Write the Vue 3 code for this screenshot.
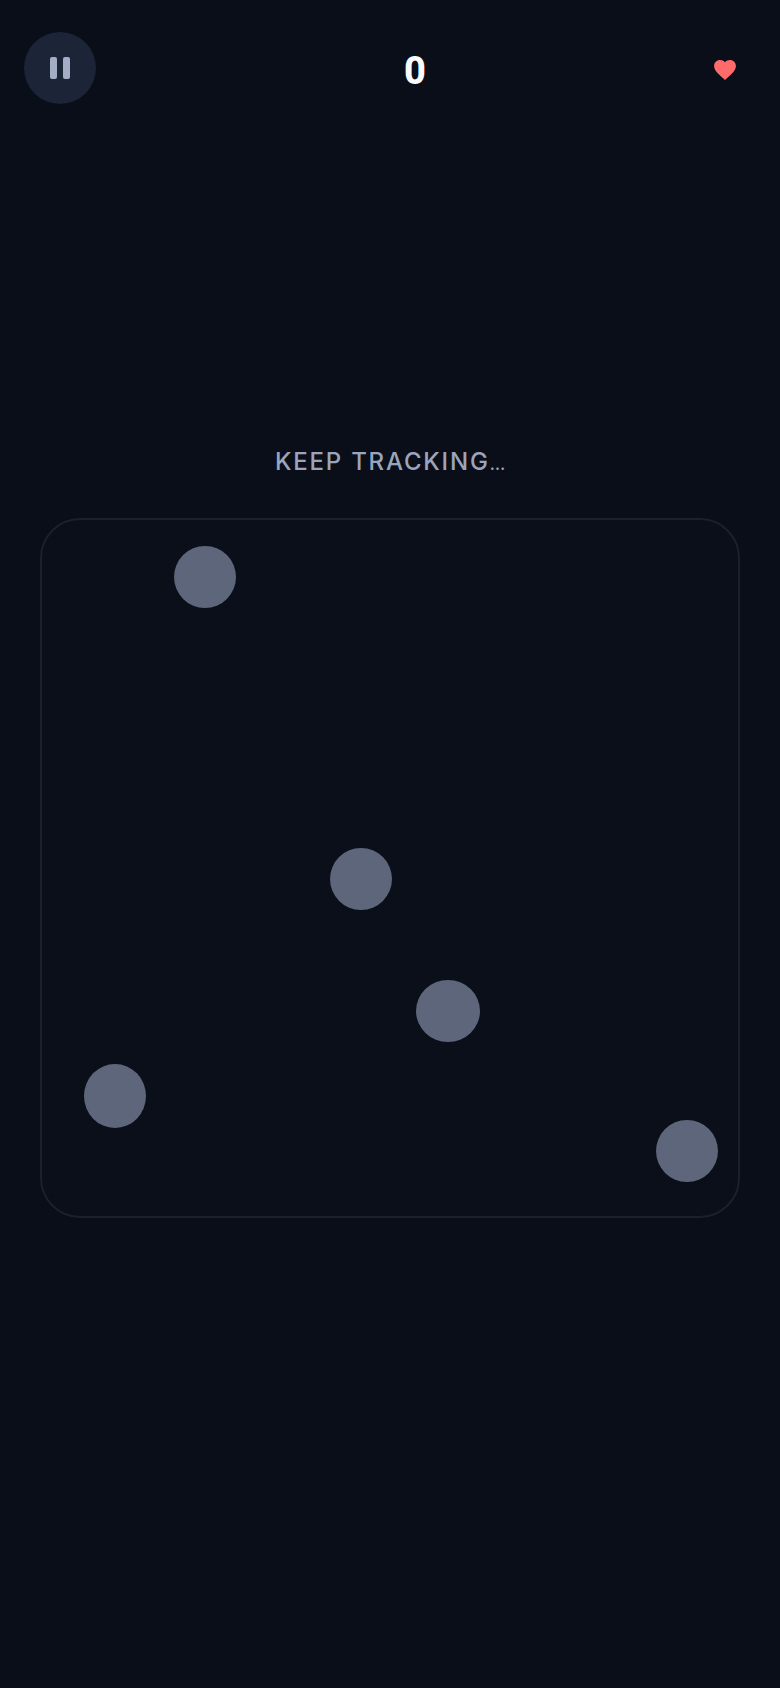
<template>
  <div class="screen">
    <header class="top-bar">
      <button type="button" class="pause-btn" aria-label="Pause">
        <span class="pause-bar"></span>
        <span class="pause-bar"></span>
      </button>
      <div class="score">{{ score }}</div>
      <div class="lives">
        <svg class="heart" viewBox="2 3 20 18.35" aria-hidden="true">
          <path d="M12 21.35l-1.45-1.32C5.400 15.360 2 12.280 2 8.500 2 5.420 4.420 3 7.500 3c1.740 0 3.410.810 4.500 2.090C13.090 3.810 14.760 3 16.500 3 19.580 3 22 5.420 22 8.500c0 3.780-3.400 6.860-8.550 11.540L12 21.350z" />
        </svg>
      </div>
    </header>

    <main class="play-area">
      <p class="status">KEEP TRACKING<span class="ellipsis">…</span></p>
      <div class="board">
        <span
          v-for="(dot, i) in dots"
          :key="i"
          class="dot"
          :style="{ left: dot.x + 'px', top: dot.y + 'px', width: dot.w + 'px', height: dot.h + 'px' }"
        ></span>
      </div>
    </main>
  </div>
</template>

<script setup>
import { ref } from 'vue'

const score = ref(0)

// positions are relative to the board's padding box
const dots = [
  { x: 132, y: 26, w: 62, h: 62 },
  { x: 288, y: 328, w: 62, h: 62 },
  { x: 374, y: 460, w: 64, h: 62 },
  { x: 42, y: 544, w: 62, h: 64 },
  { x: 614, y: 600, w: 62, h: 62 },
]
</script>

<style>
html,
body {
  margin: 0;
  background: #0a0e18;
}
</style>

<style scoped>
.screen {
  width: 780px;
  height: 1688px;
  background: #0a0e18;
  font-family: Inter, 'Liberation Sans', sans-serif;
  overflow: hidden;
}

.top-bar {
  display: flex;
  justify-content: space-between;
  align-items: center;
  padding: 32px 24px 0;
}

.pause-btn {
  display: flex;
  align-items: center;
  justify-content: center;
  gap: 6px;
  width: 72px;
  height: 72px;
  padding: 0;
  border: none;
  border-radius: 50%;
  background: #1c2438;
}

.pause-bar {
  width: 7px;
  height: 22px;
  border-radius: 2px;
  background: #a3adc5;
}

.score {
  margin-left: 20px;
  padding-top: 5px;
  font-family: Roboto, Inter, sans-serif;
  font-size: 38px;
  font-weight: 800;
  line-height: 44px;
  color: #f8fafc;
}

.lives {
  display: flex;
  padding: 4px 20px 0 0;
}

.heart {
  display: block;
  width: 22px;
  height: 20px;
  fill: #ff6b6b;
}

.play-area {
  display: flex;
  flex-direction: column;
  align-items: center;
  padding-top: 343px;
}

.status {
  height: 30px;
  margin: 0 0 41px;
  font-size: 24px;
  font-weight: 500;
  line-height: 30px;
  letter-spacing: 1.8px;
  color: #9aa5bd;
}

.ellipsis {
  font-size: 17px;
  letter-spacing: 0;
}

.board {
  position: relative;
  box-sizing: border-box;
  width: 700px;
  height: 700px;
  border: 2px solid #1c202c;
  border-radius: 40px;
  background: #0b0f19;
}

.dot {
  position: absolute;
  border-radius: 50%;
  background: #5d667b;
}
</style>
